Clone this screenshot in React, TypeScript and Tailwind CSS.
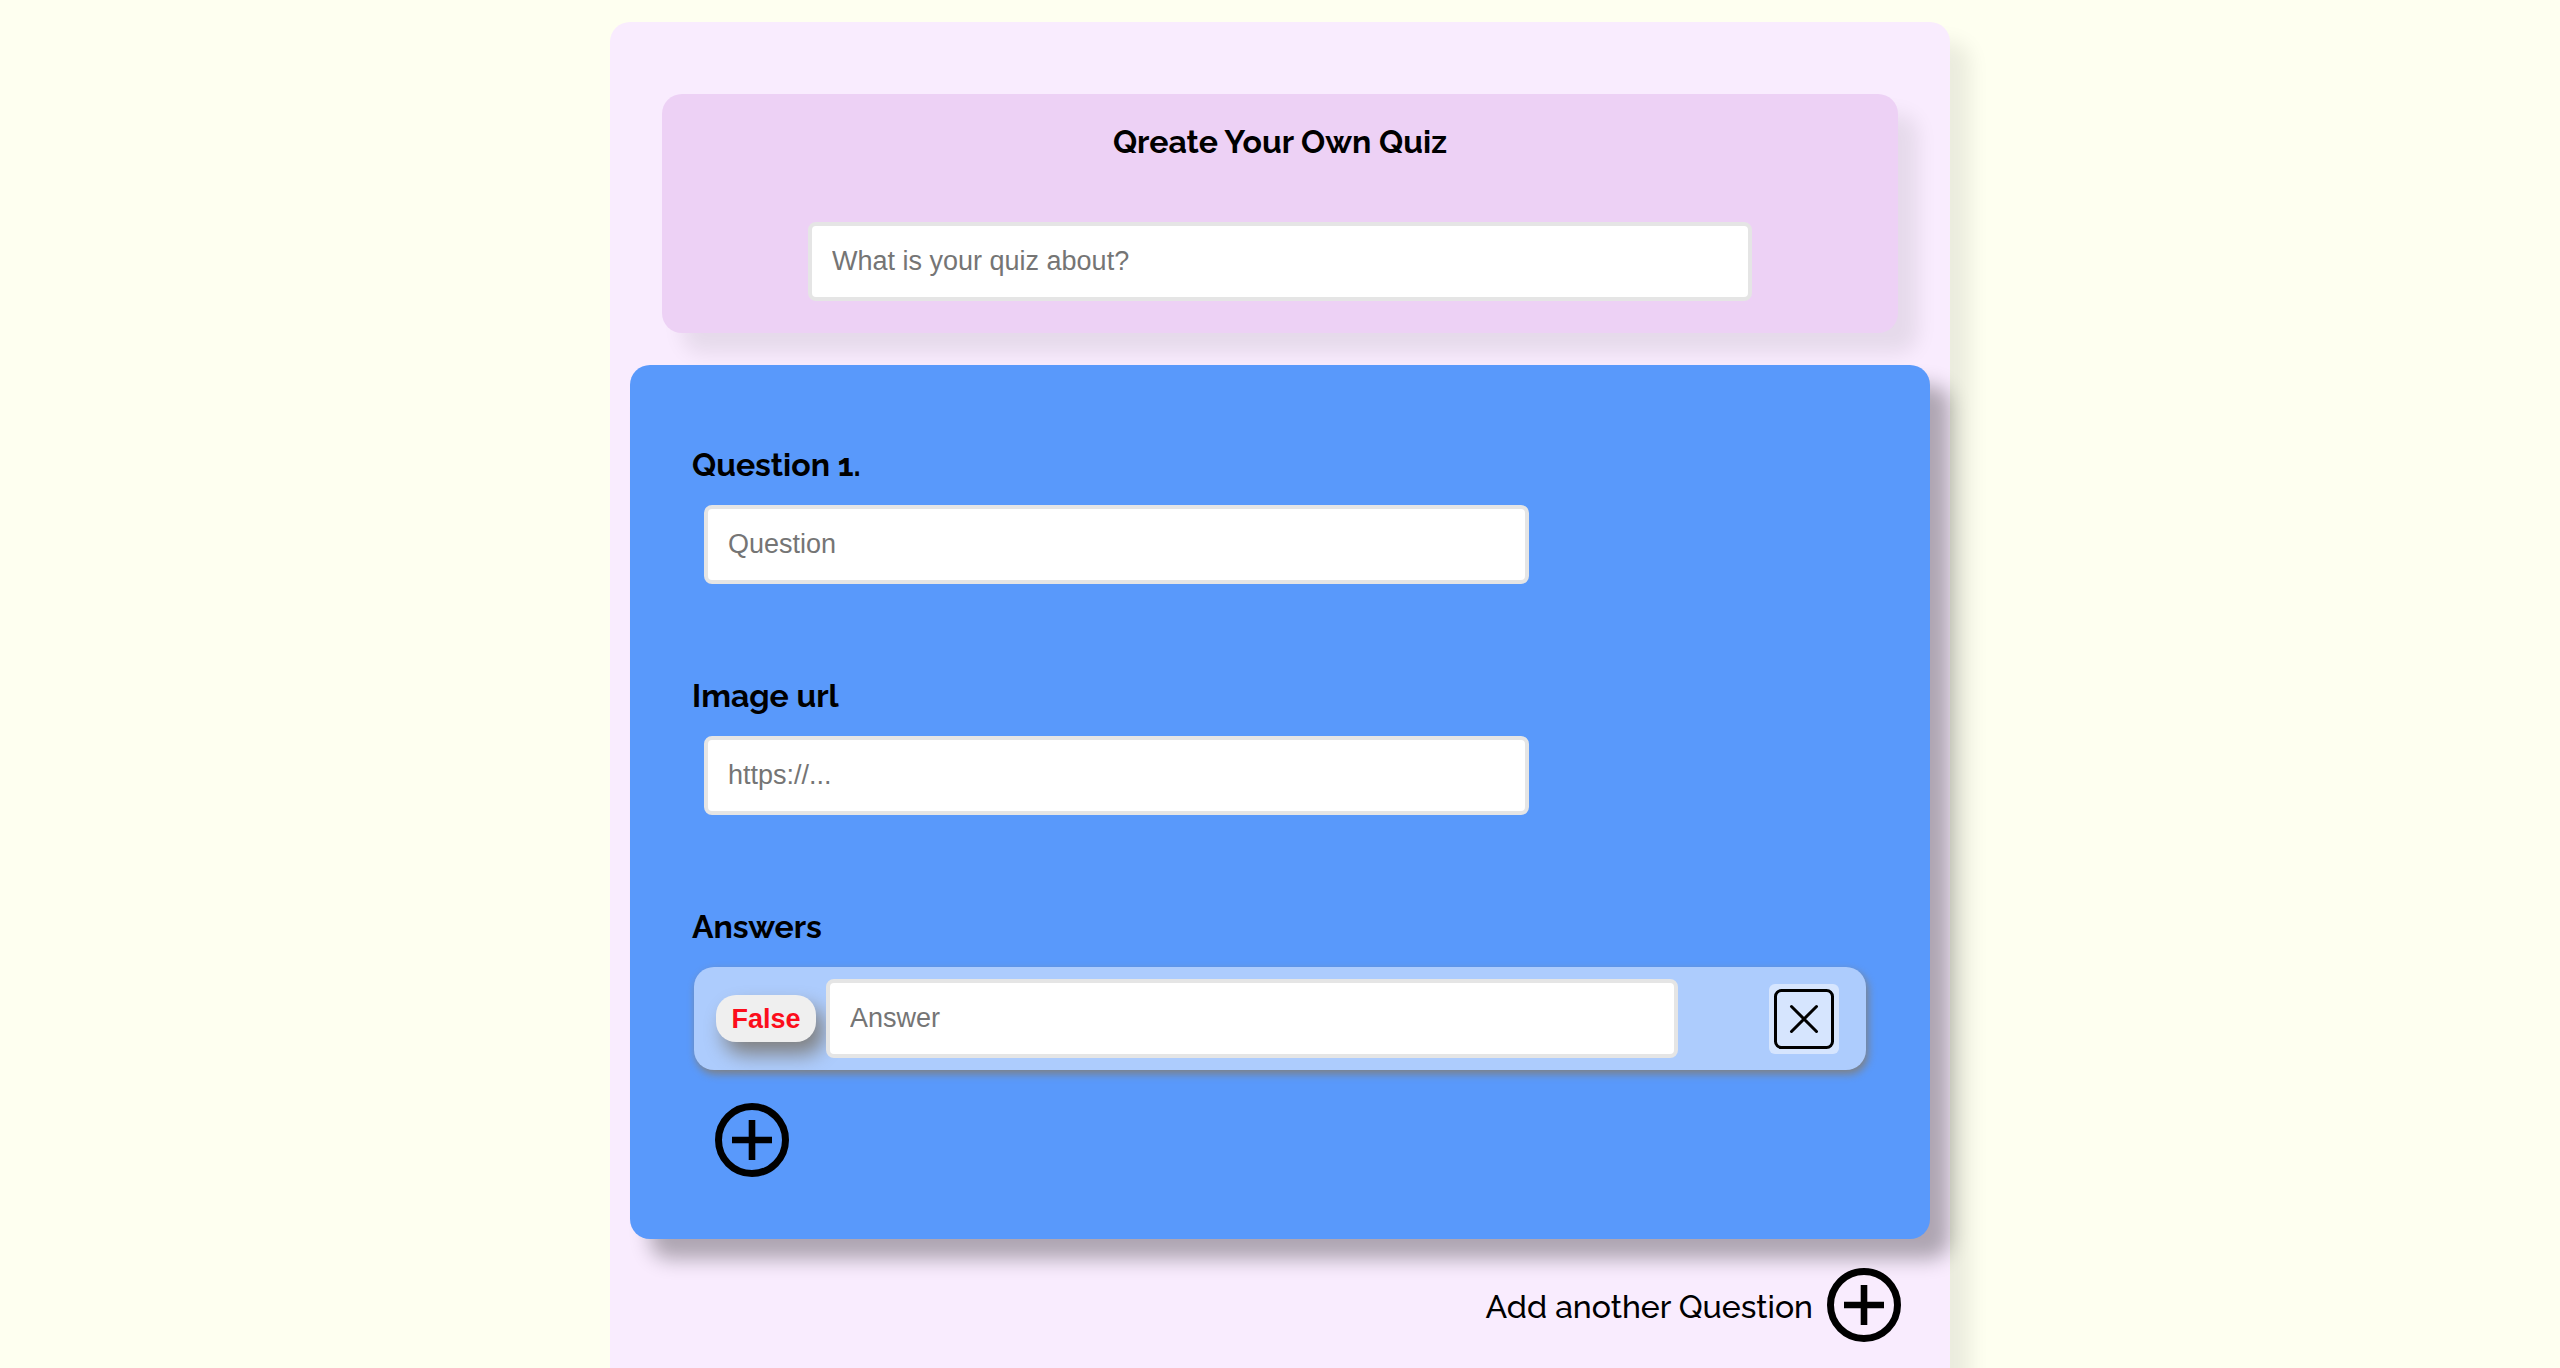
import React, { useState } from "react";

const inputClass =
  "block h-[79px] rounded-lg border-4 border-[#e5e5e5] bg-white px-5 font-['Liberation_Sans',Arial,sans-serif] text-[27px] text-black placeholder:text-[#757575] outline-none";

function PlusIcon() {
  return (
    <svg viewBox="0 0 74 74" className="block size-[74px]" fill="none" stroke="black" aria-hidden="true">
      <circle cx="37" cy="37" r="33.5" strokeWidth="7" />
      <path d="M37 17v40M17 37h40" strokeWidth="6.6" />
    </svg>
  );
}

function CloseIcon() {
  return (
    <svg viewBox="0 0 70 70" className="block size-[70px]" fill="none" stroke="black" aria-hidden="true">
      <rect x="6.500" y="6.500" width="57" height="57" rx="6" strokeWidth="3" />
      <path d="M22.500 22.500l25 25M47.500 22.500l-25 25" strokeWidth="3" strokeLinecap="round" />
    </svg>
  );
}

export default function App() {
  const [correct, setCorrect] = useState(false);
  return (
    <div className="min-h-screen overflow-hidden bg-[#fefff0] pt-[22px] font-[Raleway,Lato,sans-serif] text-[32px] leading-10 text-black">
      <main className="mx-auto min-h-[1400px] max-w-[1340px] rounded-[20px] bg-[#f9ecfe] px-5 pt-[72px] shadow-[20px_20px_20px_rgba(0,0,0,0.08)]">
        <header className="mx-8 flex flex-col items-center rounded-[20px] bg-[#edd1f5] pt-7 pb-8 shadow-[20px_20px_20px_rgba(0,0,0,0.08)]">
          <h1 className="mb-[60px] font-bold">
            <label htmlFor="topic">Qreate Your Own Quiz</label>
          </h1>
          <input id="topic" className={`${inputClass} w-[944px] max-w-full`} placeholder="What is your quiz about?" />
        </header>

        <section className="mt-8 rounded-[20px] bg-[#5999fb] px-[62px] pt-20 pb-[62px] shadow-[20px_20px_20px_rgba(0,0,0,0.3)]">
          <div className="mb-[92px]">
            <label htmlFor="question" className="mb-5 block font-bold">Question 1.</label>
            <input id="question" className={`${inputClass} ml-3 w-[825px] max-w-full`} placeholder="Question" />
          </div>
          <div className="mb-[92px]">
            <label htmlFor="image" className="mb-5 block font-bold">Image url</label>
            <input id="image" className={`${inputClass} ml-3 w-[825px] max-w-full`} placeholder="https://..." />
          </div>
          <label htmlFor="answer" className="mb-5 block font-bold">Answers</label>
          <div className="mx-0.5 flex items-center rounded-[20px] bg-[#adccfd] py-3 pr-[27px] pl-[22px] shadow-[2px_4px_8px_gray]">
            <button
              type="button"
              onClick={() => setCorrect(!correct)}
              className="mr-2.5 h-[47px] w-[100px] rounded-[20px] bg-[#efefef] font-['Liberation_Sans',Arial,sans-serif] text-[27px] leading-8 font-bold text-[#fc0d1b] shadow-[8px_12px_20px_gray]"
            >
              {correct ? "True" : "False"}
            </button>
            <input id="answer" className={`${inputClass} w-[852px] min-w-0`} placeholder="Answer" />
            <button
              type="button"
              aria-label="Remove answer"
              className="ml-auto rounded-md bg-[#d6e5fe]"
            >
              <CloseIcon />
            </button>
          </div>
          <button type="button" aria-label="Add answer" className="mt-[33px] ml-[23px] block">
            <PlusIcon />
          </button>
        </section>

        <div className="mt-[29px] mr-[29px] flex items-center justify-end gap-3.5">
          <span id="add-question" className="pt-1 font-medium">Add another Question</span>
          <button type="button" aria-labelledby="add-question">
            <PlusIcon />
          </button>
        </div>
      </main>
    </div>
  );
}
